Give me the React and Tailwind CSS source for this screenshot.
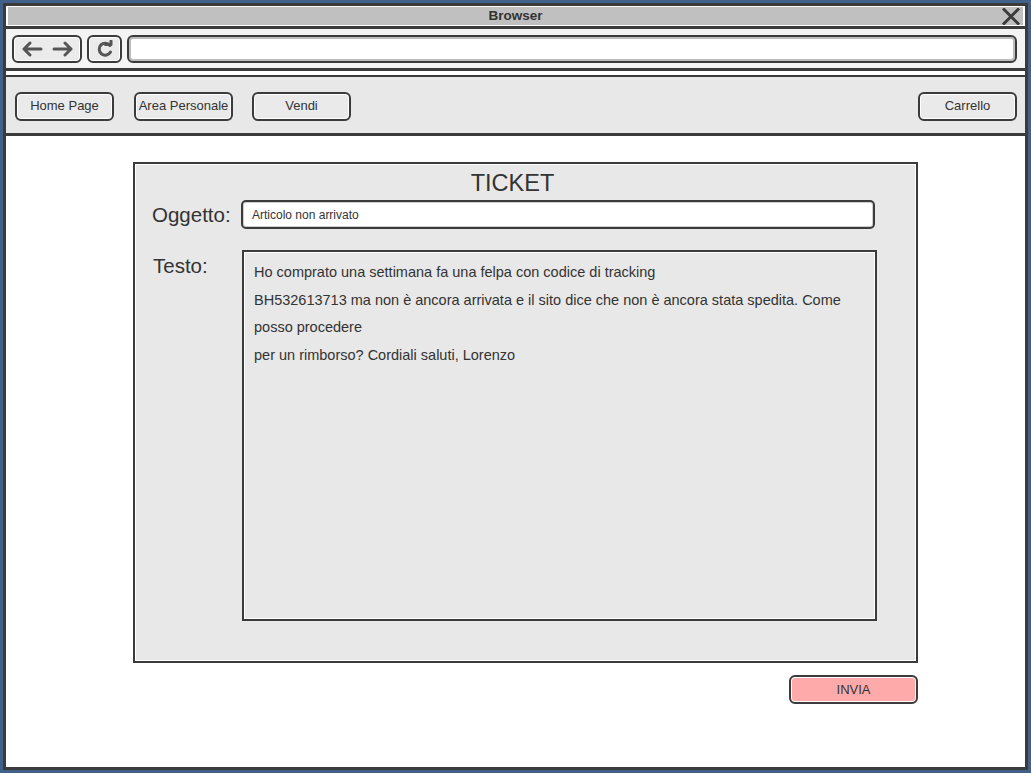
import React from "react";

const font = { fontFamily: '"Liberation Sans", Arial, sans-serif' };

const SketchButton = ({ children, className = "" }) => (
  <div
    className={`flex items-center justify-center rounded-[6px] border-2 border-[#3b3b3b] shadow-[inset_0_0_0_1px_#ffffff] text-[13px] text-[#333] ${className}`}
  >
    {children}
  </div>
);

const ArrowLeft = () => (
  <svg width="22" height="16" viewBox="0 0 22 16" fill="none" stroke="#555" strokeWidth="3" strokeLinecap="round" strokeLinejoin="round">
    <path d="M20 8H3M9 2L3 8l6 6" />
  </svg>
);

const ArrowRight = () => (
  <svg width="22" height="16" viewBox="0 0 22 16" fill="none" stroke="#555" strokeWidth="3" strokeLinecap="round" strokeLinejoin="round">
    <path d="M2 8h17M13 2l6 6-6 6" />
  </svg>
);

const Reload = () => (
  <svg width="18" height="18" viewBox="0 0 18 18" fill="none" stroke="#555" strokeWidth="3" strokeLinecap="round" strokeLinejoin="round">
    <path d="M14 5.5A6 6 0 1 0 14.5 12" />
    <path d="M9.5 4.5H15V1" />
  </svg>
);

const CloseX = () => (
  <svg width="18" height="17" viewBox="0 0 18 17" fill="none" stroke="#3b3b3b" strokeWidth="3" strokeLinecap="square">
    <path d="M2 1.5l14 14M16 1.5l-14 14" />
  </svg>
);

const lines = [
  "Ho comprato una settimana fa una felpa con codice di tracking",
  "BH532613713 ma non è ancora arrivata e il sito dice che non è ancora stata spedita. Come",
  "posso procedere",
  "per un rimborso? Cordiali saluti, Lorenzo",
];

export default function App() {
  return (
    <div className="w-[1031px] h-[773px] bg-[#41618a] p-[3px]" style={font}>
      <div className="h-full border-[3px] border-[#3b3b3b] bg-white flex flex-col">
        {/* title bar */}
        <div className="px-[2px] py-[1px]">
          <div className="relative h-[18px] bg-[#c0c0c0] flex items-center justify-center">
            <span className="text-[13.5px] font-bold text-[#333] leading-none">Browser</span>
            <div className="absolute right-[3px] top-[1px]">
              <CloseX />
            </div>
          </div>
        </div>
        <div className="h-[3px] bg-[#3b3b3b]" />

        {/* toolbar */}
        <div className="h-[39px] bg-[#f4f4f4] flex items-center gap-[5px] pl-[6px] pr-[8px]">
          <SketchButton className="w-[70px] h-[28px] bg-[#ebebeb] gap-[9px]">
            <ArrowLeft />
            <ArrowRight />
          </SketchButton>
          <SketchButton className="w-[35px] h-[28px] bg-[#ebebeb]">
            <Reload />
          </SketchButton>
          <div className="flex-1 h-[28px] rounded-[6px] border-2 border-[#3b3b3b] bg-white shadow-[inset_0_0_0_2px_#bdbdbd]" />
        </div>
        <div className="h-[3px] bg-[#3b3b3b]" />
        <div className="h-[4px] bg-white" />
        <div className="h-[2px] bg-[#3b3b3b]" />

        {/* nav */}
        <div className="h-[56px] bg-[#e8e8e8] flex items-center pl-[9px] pr-[8px] pt-[2px]">
          <SketchButton className="w-[99px] h-[29px] bg-[#eaeaea] text-[12.5px]">Home Page</SketchButton>
          <SketchButton className="w-[99px] h-[29px] bg-[#eaeaea] ml-[20px] text-[12.5px]">Area Personale</SketchButton>
          <SketchButton className="w-[99px] h-[29px] bg-[#eaeaea] ml-[19px] text-[12.5px]">Vendi</SketchButton>
          <SketchButton className="w-[99px] h-[29px] bg-[#eaeaea] ml-auto text-[12.5px]">Carrello</SketchButton>
        </div>
        <div className="h-[3px] bg-[#3b3b3b]" />

        {/* content */}
        <div className="flex-1 pt-[26px] pl-[127px]">
          <div className="w-[785px] h-[501px] border-2 border-[#3b3b3b] bg-[#e8e8e8] shadow-[inset_0_0_0_1px_#ffffff] flex flex-col">
            <div className="h-[34px] pt-[4px] pr-[26px] text-center text-[23.5px] leading-[30px] text-[#333]">TICKET</div>
            <div className="flex items-center mt-[2px]">
              <div className="w-[106px] pl-[17px] text-[20.5px] leading-[29px] text-[#333]">Oggetto:</div>
              <div className="w-[634px] h-[29px] rounded-[5px] border-2 border-[#3b3b3b] bg-white shadow-[inset_0_0_0_1px_#cfcfcf] flex items-center pl-[9px] text-[12px] text-[#333]">
                Articolo non arrivato
              </div>
            </div>
            <div className="flex mt-[21px]">
              <div className="w-[107px] pl-[18px] pt-[4px] text-[20.5px] leading-[24px] text-[#333]">Testo:</div>
              <div className="w-[635px] h-[371px] border-2 border-[#3b3b3b] bg-[#e8e8e8] shadow-[inset_0_0_0_1px_#ffffff] pl-[10px] pt-[7px] text-[14.5px] leading-[27.5px] text-[#333]">
                {lines.map((l) => (
                  <div key={l} className="whitespace-nowrap">{l}</div>
                ))}
              </div>
            </div>
          </div>
          <div className="w-[785px] flex justify-end mt-[12px]">
            <SketchButton className="w-[129px] h-[29px] bg-[#ffaaaa]">INVIA</SketchButton>
          </div>
        </div>
      </div>
    </div>
  );
}
